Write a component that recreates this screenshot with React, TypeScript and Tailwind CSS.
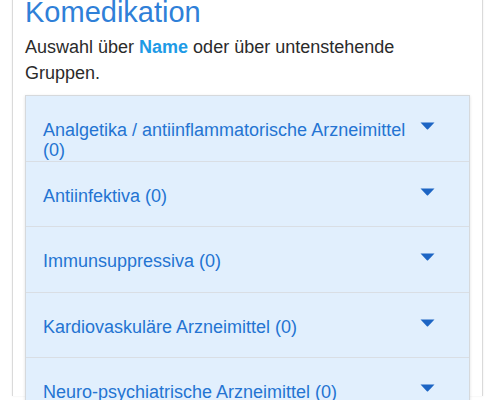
import React from 'react';

const groups = [
    'Analgetika / antiinflammatorische Arzneimittel (0)',
    'Antiinfektiva (0)',
    'Immunsuppressiva (0)',
    'Kardiovaskuläre Arzneimittel (0)',
    'Neuro-psychiatrische Arzneimittel (0)',
    'Onkologika (0)',
];

function Caret() {
    return (
        <svg width="15" height="8" viewBox="0 0 15 8" className="shrink-0 mt-[26px]">
            <path d="M0.5 0.5 L14.5 0.5 L8.1 7.3 Q7.5 7.9 6.9 7.3 Z" fill="#1d65c4" />
        </svg>
    );
}

export default function App() {
    return (
        <div className="h-[400px] overflow-hidden bg-white px-3" style={{ fontFamily: '"Liberation Sans", Arial, sans-serif' }}>
            <div className="border-x border-[#dadada] shadow-[0_0_2px_rgba(0,0,0,0.08)] px-3 h-full">
                {/* Heading */}
                <h1 className="text-[29px] leading-[32px] mt-[-4px] text-[#2f80d8] font-normal">Komedikation</h1>
                <p className="mt-[6px] text-[18px] leading-[26px] text-[#2b2b2b]">
                    Auswahl über <span className="font-bold text-[#1e9be6]">Name</span> oder über untenstehende Gruppen.
                </p>

                {/* Group list */}
                <div className="mt-[9px] border border-[#d6d9dc] shadow-[0_1px_3px_rgba(0,0,0,0.12)]">
                    {groups.map((g, i) => (
                        <div
                            key={i}
                            className="h-[65.5px] border-b border-[#d9dee4] bg-[#e1effd] flex items-start pl-[17px] pr-[34px] gap-[10px]"
                        >
                            <span className="flex-1 pt-[24px] text-[18px] leading-[20px] text-[#2474d2]">{g}</span>
                            <Caret />
                        </div>
                    ))}
                </div>
            </div>
        </div>
    );
}
